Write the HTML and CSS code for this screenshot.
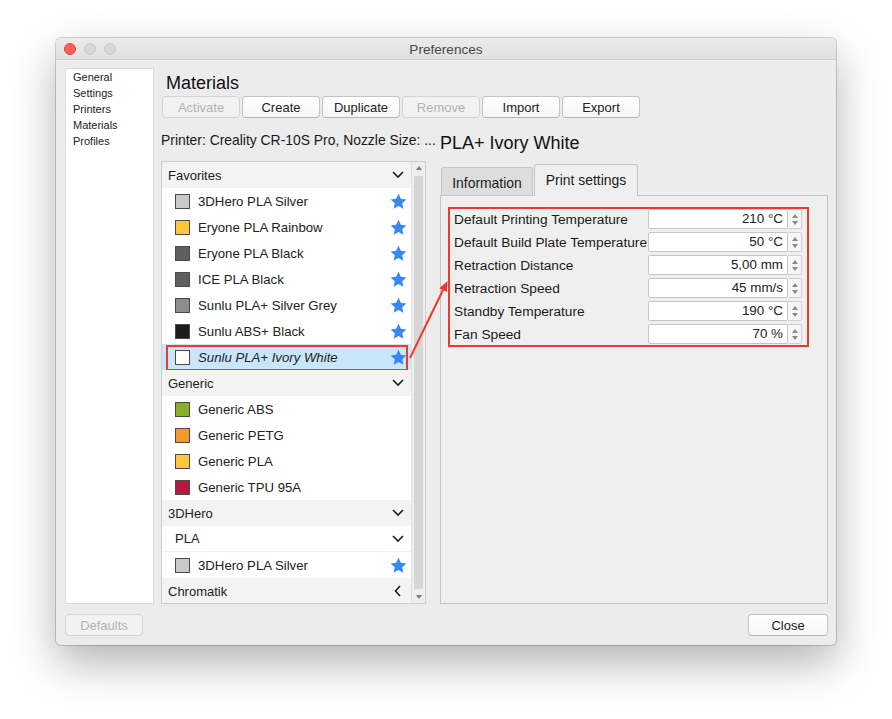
FILE: index.html
```html
<!DOCTYPE html>
<html>
<head>
<meta charset="utf-8">
<link rel="stylesheet" href="styles.css">
</head>
<body>
<div class="stage">
  <div class="window">
    <div class="titlebar">
      <div class="lights">
        <span class="light red"></span>
        <span class="light gray"></span>
        <span class="light gray"></span>
      </div>
      <div class="title">Preferences</div>
      <div></div>
    </div>
    <div class="content">
      <div class="top">
        <ul class="sidebar">
          <li>General</li>
          <li>Settings</li>
          <li>Printers</li>
          <li>Materials</li>
          <li>Profiles</li>
        </ul>
        <div class="main">
          <h1 class="heading">Materials</h1>
          <div class="toolbar">
            <button class="btn" disabled>Activate</button>
            <button class="btn">Create</button>
            <button class="btn">Duplicate</button>
            <button class="btn" disabled>Remove</button>
            <button class="btn">Import</button>
            <button class="btn">Export</button>
          </div>
          <div class="columns">
            <div class="left">
              <div class="printer">Printer: Creality CR-10S Pro, Nozzle Size: ...</div>
              <div class="list">
                <div class="rows">
                  <div class="row header"><span>Favorites</span><svg class="chev" width="12" height="8" viewBox="0 0 12 8"><polyline points="1,1 6,6 11,1"/></svg></div>
                  <div class="row item"><span class="sw" style="background:#c9c9c9"></span><span class="name">3DHero PLA Silver</span><svg class="star" viewBox="0 0 16 16"><polygon points="8,0.6 10.2,5.5 15.4,6 11.5,9.6 12.6,14.9 8,12.2 3.4,14.9 4.5,9.6 0.6,6 5.8,5.5"/></svg></div>
                  <div class="row item"><span class="sw" style="background:#fdc63b"></span><span class="name">Eryone PLA Rainbow</span><svg class="star" viewBox="0 0 16 16"><polygon points="8,0.6 10.2,5.5 15.4,6 11.5,9.6 12.6,14.9 8,12.2 3.4,14.9 4.5,9.6 0.6,6 5.8,5.5"/></svg></div>
                  <div class="row item"><span class="sw" style="background:#5f5f5f"></span><span class="name">Eryone PLA Black</span><svg class="star" viewBox="0 0 16 16"><polygon points="8,0.6 10.2,5.5 15.4,6 11.5,9.6 12.6,14.9 8,12.2 3.4,14.9 4.5,9.6 0.6,6 5.8,5.5"/></svg></div>
                  <div class="row item"><span class="sw" style="background:#5f5f5f"></span><span class="name">ICE PLA Black</span><svg class="star" viewBox="0 0 16 16"><polygon points="8,0.6 10.2,5.5 15.4,6 11.5,9.6 12.6,14.9 8,12.2 3.4,14.9 4.5,9.6 0.6,6 5.8,5.5"/></svg></div>
                  <div class="row item"><span class="sw" style="background:#8e8e8e"></span><span class="name">Sunlu PLA+ Silver Grey</span><svg class="star" viewBox="0 0 16 16"><polygon points="8,0.6 10.2,5.5 15.4,6 11.5,9.6 12.6,14.9 8,12.2 3.4,14.9 4.5,9.6 0.6,6 5.8,5.5"/></svg></div>
                  <div class="row item"><span class="sw" style="background:#1c1c1c"></span><span class="name">Sunlu ABS+ Black</span><svg class="star" viewBox="0 0 16 16"><polygon points="8,0.6 10.2,5.5 15.4,6 11.5,9.6 12.6,14.9 8,12.2 3.4,14.9 4.5,9.6 0.6,6 5.8,5.5"/></svg></div>
                  <div class="row item selected"><span class="sw" style="background:#ffffff"></span><span class="name">Sunlu PLA+ Ivory White</span><svg class="star" viewBox="0 0 16 16"><polygon points="8,0.6 10.2,5.5 15.4,6 11.5,9.6 12.6,14.9 8,12.2 3.4,14.9 4.5,9.6 0.6,6 5.8,5.5"/></svg></div>
                  <div class="row header"><span>Generic</span><svg class="chev" width="12" height="8" viewBox="0 0 12 8"><polyline points="1,1 6,6 11,1"/></svg></div>
                  <div class="row item"><span class="sw" style="background:#8bae2d"></span><span class="name">Generic ABS</span></div>
                  <div class="row item"><span class="sw" style="background:#f3982c"></span><span class="name">Generic PETG</span></div>
                  <div class="row item"><span class="sw" style="background:#fdc63b"></span><span class="name">Generic PLA</span></div>
                  <div class="row item"><span class="sw" style="background:#b01b3c"></span><span class="name">Generic TPU 95A</span></div>
                  <div class="row header"><span>3DHero</span><svg class="chev" width="12" height="8" viewBox="0 0 12 8"><polyline points="1,1 6,6 11,1"/></svg></div>
                  <div class="row subheader"><span>PLA</span><svg class="chev" width="12" height="8" viewBox="0 0 12 8"><polyline points="1,1 6,6 11,1"/></svg></div>
                  <div class="row item"><span class="sw" style="background:#c9c9c9"></span><span class="name">3DHero PLA Silver</span><svg class="star" viewBox="0 0 16 16"><polygon points="8,0.6 10.2,5.5 15.4,6 11.5,9.6 12.6,14.9 8,12.2 3.4,14.9 4.5,9.6 0.6,6 5.8,5.5"/></svg></div>
                  <div class="row header"><span>Chromatik</span><svg class="chev left-chev" width="8" height="12" viewBox="0 0 8 12"><polyline points="6,1 1.5,6 6,11"/></svg></div>
                </div>
                <div class="scrollbar">
                  <span class="arrow up"></span>
                  <span class="thumb"></span>
                  <span class="arrow down"></span>
                </div>
              </div>
            </div>
            <div class="right">
              <div class="detail-title">PLA+ Ivory White</div>
              <div class="tabs">
                <div class="tab">Information</div>
                <div class="tab active">Print settings</div>
              </div>
              <div class="panel">
                <div class="settings">
                  <div class="label">Default Printing Temperature</div>
                  <div class="field">210 °C</div><div class="spin"><i class="up"></i><i class="dn"></i></div>
                  <div class="label">Default Build Plate Temperature</div>
                  <div class="field">50 °C</div><div class="spin"><i class="up"></i><i class="dn"></i></div>
                  <div class="label">Retraction Distance</div>
                  <div class="field">5,00 mm</div><div class="spin"><i class="up"></i><i class="dn"></i></div>
                  <div class="label">Retraction Speed</div>
                  <div class="field">45 mm/s</div><div class="spin"><i class="up"></i><i class="dn"></i></div>
                  <div class="label">Standby Temperature</div>
                  <div class="field">190 °C</div><div class="spin"><i class="up"></i><i class="dn"></i></div>
                  <div class="label">Fan Speed</div>
                  <div class="field">70 %</div><div class="spin"><i class="up"></i><i class="dn"></i></div>
                </div>
              </div>
            </div>
          </div>
        </div>
      </div>
      <div class="footer">
        <button class="btn defaults" disabled>Defaults</button>
        <button class="btn close">Close</button>
      </div>
    </div>
  </div>
  <svg class="callout" width="892" height="719" viewBox="0 0 892 719">
    <line x1="410" y1="358" x2="444" y2="288"/>
    <polygon points="447.5,281 446.9,292 439.3,288.3"/>
  </svg>
</div>
</body>
</html>
```
FILE: styles.css
```css
* { box-sizing: border-box; }
html, body { margin: 0; padding: 0; }
body {
  width: 892px;
  height: 719px;
  overflow: hidden;
  background: #ffffff;
  font-family: "Liberation Sans", Arial, sans-serif;
  font-size: 13px;
  color: #222;
}
.stage {
  position: relative;
  width: 892px;
  height: 719px;
  padding: 38px 0 0 56px;
}
.window {
  width: 780px;
  height: 607px;
  background: #ececec;
  border-radius: 5px;
  box-shadow: 0 0 0 1px rgba(0,0,0,0.16), 0 18px 44px rgba(0,0,0,0.30);
  overflow: hidden;
}
.titlebar {
  height: 22px;
  display: grid;
  grid-template-columns: 1fr auto 1fr;
  align-items: center;
  background: linear-gradient(#ebebeb, #e0e0e0);
  border-bottom: 1px solid #cfcfcf;
}
.lights { display: flex; gap: 8px; padding-left: 8px; }
.light {
  width: 12px; height: 12px; border-radius: 50%;
  display: block;
}
.light.red { background: #fc605b; border: 1px solid #e0443e; }
.light.gray { background: #d9d9d9; border: 1px solid #cacaca; }
.title { color: #4a4a4a; font-size: 13.6px; padding-top: 2px; }

.content { padding: 8px 8px 0 9px; }
.top { display: flex; gap: 7px; height: 536px; }
.sidebar {
  list-style: none;
  margin: 0;
  padding: 0 7px;
  width: 89px;
  height: 536px;
  background: #fff;
  border: 1px solid #dcdcdc;
  font-size: 11px;
  line-height: 16px;
}
.main { flex: 1; display: flex; flex-direction: column; }
.heading {
  margin: 2px 0 0 0;
  padding-left: 5px;
  height: 26px;
  line-height: 26px;
  font-size: 18px;
  font-weight: normal;
  color: #111;
}
.toolbar { display: flex; gap: 2px; padding-left: 1px; height: 22px; }
.btn {
  width: 78px;
  height: 22px;
  font-family: inherit;
  font-size: 13px;
  color: #222;
  background: linear-gradient(#ffffff, #f6f6f6);
  border: 1px solid #c4c4c4;
  border-bottom-color: #b4b4b4;
  border-radius: 4px;
  padding: 0;
}
.btn[disabled] {
  color: #b2b2b2;
  background: #f2f2f2;
  border-color: #d4d4d4;
}
.columns { display: flex; gap: 14px; }
.left { width: 265px; }
.printer {
  padding-top: 14px;
  height: 43px;
  line-height: 17px;
  font-size: 13.9px;
  white-space: nowrap;
  color: #1a1a1a;
}
.list {
  display: flex;
  height: 443px;
  border: 1px solid #cdcdcd;
  background: #fff;
}
.rows { flex: 1; overflow: hidden; }
.row {
  height: 26px;
  display: flex;
  align-items: center;
  position: relative;
}
.row.header { background: #f3f3f3; padding-left: 6px; }
.row.subheader { background: #fff; padding-left: 13px; border-bottom: 1px solid #f0f0f0; }
.row.item { padding-left: 13px; }
.row.selected { background: #c9e6fb; }
.row.selected .name { font-style: italic; }
.row.selected::after {
  content: "";
  position: absolute;
  left: 4px; right: 3px; top: 1px; bottom: -1px;
  border: 2px solid #ea3b2e;
}
.sw {
  width: 15px; height: 15px;
  border: 1px solid #4a4a4a;
  flex: none;
  margin-right: 8px;
}
.name { flex: 1; white-space: nowrap; font-size: 13.2px; }
.row.header span, .row.subheader span { flex: 1; }
.star {
  width: 17px; height: 17px;
  fill: #3a86f4;
  margin-right: 4px;
  flex: none;
}
.chev {
  fill: none;
  stroke: #1c1c1c;
  stroke-width: 1.6;
  margin-right: 7px;
  flex: none;
}
.chev.left-chev { margin-right: 9px; }

.scrollbar {
  width: 14px;
  background: #eeeeee;
  border-left: 1px solid #e0e0e0;
  display: flex;
  flex-direction: column;
  align-items: center;
  padding: 4px 0 4px;
}
.arrow {
  width: 0; height: 0;
  border-left: 3.5px solid transparent;
  border-right: 3.5px solid transparent;
  flex: none;
}
.arrow.up { border-bottom: 4px solid #7a7a7a; }
.arrow.down { border-top: 4px solid #7a7a7a; }
.thumb {
  flex: 1;
  width: 9px;
  margin: 6px 0;
  background: #d6d6d6;
  border-radius: 1px;
}

.right { width: 388px; }
.detail-title {
  padding-top: 14px;
  height: 46px;
  line-height: 22px;
  font-size: 18px;
  color: #111;
}
.tabs {
  display: flex;
  align-items: flex-end;
  gap: 1px;
  height: 31px;
  padding-left: 1px;
  position: relative;
  z-index: 1;
}
.tab {
  height: 28px;
  width: 92px;
  display: flex;
  align-items: center;
  justify-content: center;
  background: #dddddd;
  border: 1px solid #c4c4c4;
  border-bottom: none;
  border-radius: 3px 3px 0 0;
  color: #1a1a1a;
  font-size: 13.9px;
  padding-top: 2px;
}
.tab.active {
  height: 32px;
  width: 104px;
  margin-bottom: -1px;
  background: #efefef;
  padding-top: 0;
  padding-bottom: 2px;
}
.panel {
  height: 409px;
  background: #efefef;
  border: 1px solid #c4c4c4;
  padding: 11px 0 0 7px;
}
.settings {
  width: 361px;
  border: 2px solid #ea3b2e;
  padding: 0 5px 1px 4px;
  display: grid;
  grid-template-columns: 194px 140px 14px;
  grid-auto-rows: 20px;
  row-gap: 3px;
  align-items: center;
}
.label { white-space: nowrap; color: #1a1a1a; font-size: 13.7px; }
.field {
  height: 20px;
  background: #fff;
  border: 1px solid #c6c6c6;
  border-radius: 2px;
  text-align: right;
  padding-right: 4px;
  line-height: 18px;
  font-size: 13.4px;
}
.spin {
  height: 20px;
  background: #f6f6f6;
  border: 1px solid #cfcfcf;
  border-left: none;
  border-radius: 0 2px 2px 0;
  display: flex;
  flex-direction: column;
  align-items: center;
  justify-content: center;
  gap: 3px;
}
.spin i {
  display: block;
  width: 0; height: 0;
  border-left: 3.5px solid transparent;
  border-right: 3.5px solid transparent;
}
.spin i.up { border-bottom: 4px solid #8a8a8a; }
.spin i.dn { border-top: 4px solid #8a8a8a; }

.footer {
  margin-top: 10px;
  display: flex;
  justify-content: space-between;
}
.btn.close { width: 80px; }

.callout {
  position: absolute;
  left: 0; top: 0;
  pointer-events: none;
}
.callout line { stroke: #ea3b2e; stroke-width: 2; }
.callout polygon { fill: #ea3b2e; }
```
